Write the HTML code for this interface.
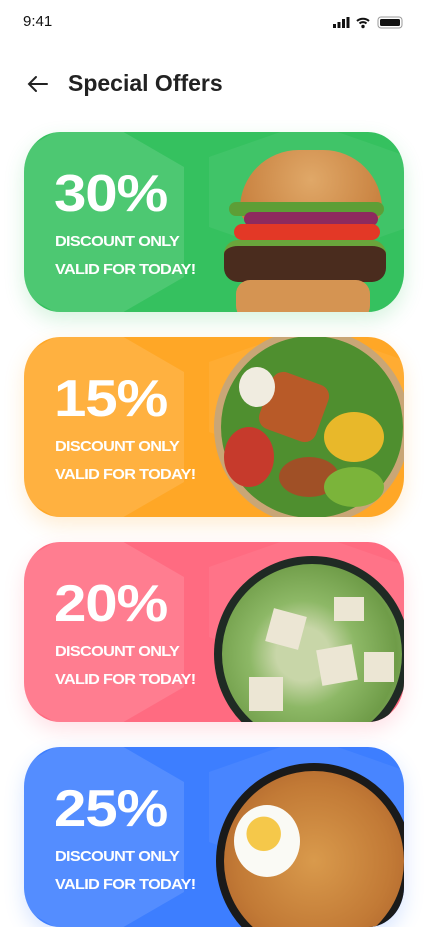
<!DOCTYPE html><html><head><style>
*{margin:0;padding:0;box-sizing:border-box}
body{width:428px;height:926px;background:#fff;position:relative;overflow:hidden;font-family:"Liberation Sans",sans-serif}
.time{position:absolute;left:23px;top:13px;font-size:15px;color:#111}
.title{position:absolute;left:68px;top:70px;font-size:23px;font-weight:bold;color:#222}
.card{position:absolute;left:24px;width:380px;height:180px;border-radius:36px/40px;overflow:hidden}
.card .hex{position:absolute;left:-30px;top:-20px;width:190px;height:220px;background:rgba(255,255,255,.12);clip-path:polygon(50% 0,100% 25%,100% 75%,50% 100%,0 75%,0 25%)}
.card .hex2{position:absolute;left:185px;top:-10px;width:200px;height:140px;background:rgba(255,255,255,.06);clip-path:polygon(50% 0,100% 25%,100% 75%,50% 100%,0 75%,0 25%)}
.pct{position:absolute;left:30px;top:34px;font-size:52px;line-height:56px;font-weight:bold;color:#fff;letter-spacing:-1px;transform:scaleX(1.12);transform-origin:left}
.l{position:absolute;left:31px;font-size:15px;font-weight:bold;color:#fff;letter-spacing:-.6px;transform:scaleX(1.08);transform-origin:left}
.food{position:absolute}
</style></head><body>
<div class="time">9:41</div>
<svg style="position:absolute;left:333px;top:16px" width="72" height="13"><rect x="0" y="8" width="3" height="4" fill="#111"/><rect x="4.5" y="6" width="3" height="6" fill="#111"/><rect x="9" y="3" width="3" height="9" fill="#111"/><rect x="13.5" y="1" width="3" height="11" fill="#111"/><path d="M24 5a9 9 0 0 1 12 0M26.5 7.5a5 5 0 0 1 7 0" stroke="#111" stroke-width="2" fill="none"/><circle cx="30" cy="10.5" r="1.7" fill="#111"/><rect x="45" y="1" width="24" height="11" rx="3" fill="none" stroke="#999"/><rect x="47" y="3" width="20" height="7" rx="1.5" fill="#111"/></svg>
<svg style="position:absolute;left:27px;top:75px" width="22" height="18"><path d="M20 9H2M9 2L2 9l7 7" stroke="#222" stroke-width="2" fill="none" stroke-linecap="round"/></svg>
<div class="title">Special Offers</div>

<div class="card" style="top:132px;background:#35C15F;box-shadow:0 8px 20px rgba(53,193,95,.2)"><div class="hex"></div><div class="hex2"></div>
<div class="pct">30%</div><div class="l" style="top:101px">DISCOUNT ONLY</div><div class="l" style="top:129px">VALID FOR TODAY!</div>
<div class="food" style="left:216px;top:18px;width:142px;height:75px;border-radius:72px 72px 20px 20px;background:radial-gradient(circle at 50% 40%,#e0a868,#c57c3a)"></div>
<div class="food" style="left:205px;top:70px;width:155px;height:14px;border-radius:8px;background:#5d9e36"></div>
<div class="food" style="left:220px;top:80px;width:134px;height:14px;border-radius:8px;background:#8e2a5e"></div>
<div class="food" style="left:210px;top:92px;width:146px;height:16px;border-radius:8px;background:#e33826"></div>
<div class="food" style="left:200px;top:108px;width:162px;height:42px;border-radius:14px;background:#4a2c1e;border-top:6px solid #6aa53b"></div>
<div class="food" style="left:212px;top:148px;width:134px;height:40px;border-radius:14px;background:#d59452"></div>
</div>

<div class="card" style="top:337px;background:#FFA726;box-shadow:0 8px 20px rgba(255,167,38,.2)"><div class="hex"></div><div class="hex2"></div>
<div class="pct">15%</div><div class="l" style="top:101px">DISCOUNT ONLY</div><div class="l" style="top:129px">VALID FOR TODAY!</div>
<div class="food" style="left:190px;top:-8px;width:196px;height:196px;border-radius:50%;background:#c9a676"></div>
<div class="food" style="left:197px;top:-1px;width:182px;height:182px;border-radius:50%;background:#4f8f2f"></div>
<div class="food" style="left:240px;top:40px;width:60px;height:60px;border-radius:12px;background:#b85a28;transform:rotate(20deg)"></div>
<div class="food" style="left:215px;top:30px;width:36px;height:40px;border-radius:50%;background:#f0ece0"></div>
<div class="food" style="left:300px;top:75px;width:60px;height:50px;border-radius:50%;background:#e8b82a"></div>
<div class="food" style="left:200px;top:90px;width:50px;height:60px;border-radius:50%;background:#c63a2c"></div>
<div class="food" style="left:255px;top:120px;width:60px;height:40px;border-radius:50%;background:#a05026"></div>
<div class="food" style="left:300px;top:130px;width:60px;height:40px;border-radius:50%;background:#7bb43a"></div>
</div>

<div class="card" style="top:542px;background:#FF6B81;box-shadow:0 8px 20px rgba(255,107,129,.2)"><div class="hex"></div><div class="hex2"></div>
<div class="pct">20%</div><div class="l" style="top:101px">DISCOUNT ONLY</div><div class="l" style="top:129px">VALID FOR TODAY!</div>
<div class="food" style="left:190px;top:14px;width:196px;height:196px;border-radius:50%;background:#1f2a24"></div>
<div class="food" style="left:198px;top:22px;width:180px;height:180px;border-radius:50%;background:radial-gradient(circle at 45% 50%,#c8d6a8 0 20%,#8db866 40%,#6f9c48 70%,#9cc07a)"></div>
<div class="food" style="left:245px;top:70px;width:34px;height:34px;background:#ece6d4;transform:rotate(15deg)"></div>
<div class="food" style="left:295px;top:105px;width:36px;height:36px;background:#ece6d4;transform:rotate(-10deg)"></div>
<div class="food" style="left:310px;top:55px;width:30px;height:24px;background:#ece6d4"></div>
<div class="food" style="left:225px;top:135px;width:34px;height:34px;background:#ece6d4"></div>
<div class="food" style="left:340px;top:110px;width:30px;height:30px;background:#ece6d4"></div>
</div>

<div class="card" style="top:747px;background:#3D7EFF;box-shadow:0 8px 20px rgba(61,126,255,.2)"><div class="hex"></div><div class="hex2"></div>
<div class="pct">25%</div><div class="l" style="top:101px">DISCOUNT ONLY</div><div class="l" style="top:129px">VALID FOR TODAY!</div>
<div class="food" style="left:192px;top:16px;width:196px;height:196px;border-radius:50%;background:#1a1a1a"></div>
<div class="food" style="left:200px;top:24px;width:180px;height:180px;border-radius:50%;background:radial-gradient(circle at 50% 50%,#d99a4c,#c27a36 60%,#a85c28)"></div>
<div class="food" style="left:210px;top:58px;width:66px;height:72px;border-radius:50%;background:radial-gradient(circle at 45% 40%,#f5c84a 0 30%,#fafaf5 31%)"></div>
</div>
</body></html>
